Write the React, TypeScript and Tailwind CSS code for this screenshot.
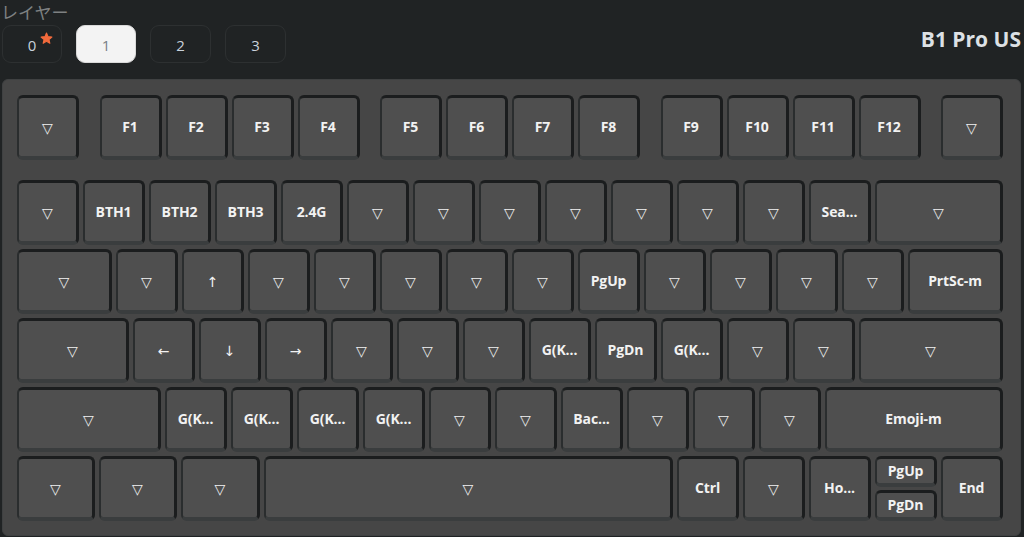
import React from "react";

type K = { l: string; w?: string };

const W1 = "w-[62px]";

const r2: K[] = [
  { l: "▽" }, { l: "BTH1" }, { l: "BTH2" }, { l: "BTH3" }, { l: "2.4G" },
  { l: "▽" }, { l: "▽" }, { l: "▽" }, { l: "▽" }, { l: "▽" }, { l: "▽" }, { l: "▽" },
  { l: "Sea..." }, { l: "▽", w: "w-[128px]" },
];
const r3: K[] = [
  { l: "▽", w: "w-[95px]" }, { l: "▽" }, { l: "↑" }, { l: "▽" }, { l: "▽" }, { l: "▽" },
  { l: "▽" }, { l: "▽" }, { l: "PgUp" }, { l: "▽" }, { l: "▽" }, { l: "▽" }, { l: "▽" },
  { l: "PrtSc-m", w: "w-[95px]" },
];
const r4: K[] = [
  { l: "▽", w: "w-[112px]" }, { l: "←" }, { l: "↓" }, { l: "→" }, { l: "▽" }, { l: "▽" },
  { l: "▽" }, { l: "G(K..." }, { l: "PgDn" }, { l: "G(K..." }, { l: "▽" }, { l: "▽" },
  { l: "▽", w: "w-[144px]" },
];
const r5: K[] = [
  { l: "▽", w: "w-[144px]" }, { l: "G(K..." }, { l: "G(K..." }, { l: "G(K..." }, { l: "G(K..." },
  { l: "▽" }, { l: "▽" }, { l: "Bac..." }, { l: "▽" }, { l: "▽" }, { l: "▽" },
  { l: "Emoji-m", w: "w-[178px]" },
];

const keyBase =
  "flex items-center justify-center shrink-0 rounded-[6px] bg-[#4f4f4f] border-t-[3px] border-r-[3px] border-l-[2px] border-b-[4px] border-t-[#1b1d1e] border-r-[#1b1d1e] border-l-[#2a2d2e] border-b-[#3a3d3e] text-[#f2f2f2] font-bold text-[14px] leading-none";

function Key({ k, h = "h-[65px]" }: { k: K; h?: string }) {
  const isSym = k.l === "▽" || k.l === "↑" || k.l === "↓" || k.l === "←" || k.l === "→";
  return (
    <div className={`${keyBase} ${k.w ?? W1} ${h}`}>
      <span
        className={isSym ? "text-[14px] font-normal pt-[1px]" : "tracking-[-0.1px]"}
        style={{ fontFamily: isSym ? '"DejaVu Sans", sans-serif' : '"Open Sans", "Noto Sans", sans-serif' }}
      >
        {k.l}
      </span>
    </div>
  );
}

function Row({ keys }: { keys: K[] }) {
  return (
    <div className="flex gap-[4px]">
      {keys.map((k, i) => (
        <Key key={i} k={k} />
      ))}
    </div>
  );
}

export default function App() {
  const fgroups = [
    ["F1", "F2", "F3", "F4"],
    ["F5", "F6", "F7", "F8"],
    ["F9", "F10", "F11", "F12"],
  ];
  return (
    <div
      className="w-[1024px] h-[537px] bg-[#202324] overflow-hidden relative"
      style={{ fontFamily: '"Open Sans", "Noto Sans", "Noto Sans CJK JP", sans-serif' }}
    >
      <div className="flex items-start justify-between">
        <div className="flex flex-col">
          <div
            className="text-[17px] leading-[23px] text-[#7e8182] pl-[1px]"
            style={{ fontFamily: '"Noto Sans CJK JP", sans-serif' }}
          >
            レイヤー
          </div>
          <div className="flex gap-[14px] pl-[2px] mt-[2px]">
            <div className="w-[60px] h-[38px] rounded-[9px] border border-[#2d3031] flex items-center justify-center text-[15px] text-[#c9d2dc]">
              <span className="relative pt-[2px]">
                0
                <svg className="absolute left-[12px] top-[0px]" width="13" height="13" viewBox="0 0 24 24">
                  <path
                    d="M12 2l2.9 6.6 7.1.6-5.4 4.7 1.6 7L12 17.3 5.8 20.9l1.6-7L2 9.2l7.1-.6z"
                    fill="#f26a3c"
                    stroke="#f26a3c"
                    strokeWidth="2"
                    strokeLinejoin="round"
                  />
                </svg>
              </span>
            </div>
            <div className="w-[60px] h-[38px] rounded-[9px] bg-[#f3f3f3] border border-[#d9d9d9] flex items-center justify-center text-[15px] text-[#7a7f86] pt-[2px]">
              1
            </div>
            <div className="w-[61px] h-[38px] rounded-[9px] border border-[#2d3031] flex items-center justify-center text-[15px] text-[#c9d2dc] pt-[2px]">
              2
            </div>
            <div className="w-[61px] h-[38px] rounded-[9px] border border-[#2d3031] flex items-center justify-center text-[15px] text-[#c9d2dc] pt-[2px]">
              3
            </div>
          </div>
        </div>
        <div className="text-[21px] font-bold text-[#dde1e5] pr-[3px] mt-[25px] leading-[28px]">B1 Pro US</div>
      </div>

      <div className="absolute left-[2px] top-[79px] w-[1019px] h-[457px] rounded-[6px] bg-[#464646] border border-[#3f4142] pl-[14px] pt-[15px]">
        <div className="w-[986px] flex flex-col">
          <div className="flex justify-between">
            <Key k={{ l: "▽" }} />
            {fgroups.map((g, gi) => (
              <div key={gi} className="flex gap-[4px]">
                {g.map((f) => (
                  <Key key={f} k={{ l: f }} />
                ))}
              </div>
            ))}
            <Key k={{ l: "▽" }} />
          </div>
          <div className="flex flex-col gap-[4px] mt-[20px]">
            <Row keys={r2} />
            <Row keys={r3} />
            <Row keys={r4} />
            <Row keys={r5} />
            <div className="flex gap-[4px]">
              <Key k={{ l: "▽", w: "w-[78px]" }} />
              <Key k={{ l: "▽", w: "w-[78px]" }} />
              <Key k={{ l: "▽", w: "w-[79px]" }} />
              <Key k={{ l: "▽", w: "w-[409px]" }} />
              <Key k={{ l: "Ctrl" }} />
              <Key k={{ l: "▽" }} />
              <Key k={{ l: "Ho..." }} />
              <div className="flex flex-col gap-[3px] w-[62px]">
                <Key k={{ l: "PgUp" }} h="h-[31px]" />
                <Key k={{ l: "PgDn" }} h="h-[31px]" />
              </div>
              <Key k={{ l: "End" }} />
            </div>
          </div>
        </div>
      </div>
    </div>
  );
}
